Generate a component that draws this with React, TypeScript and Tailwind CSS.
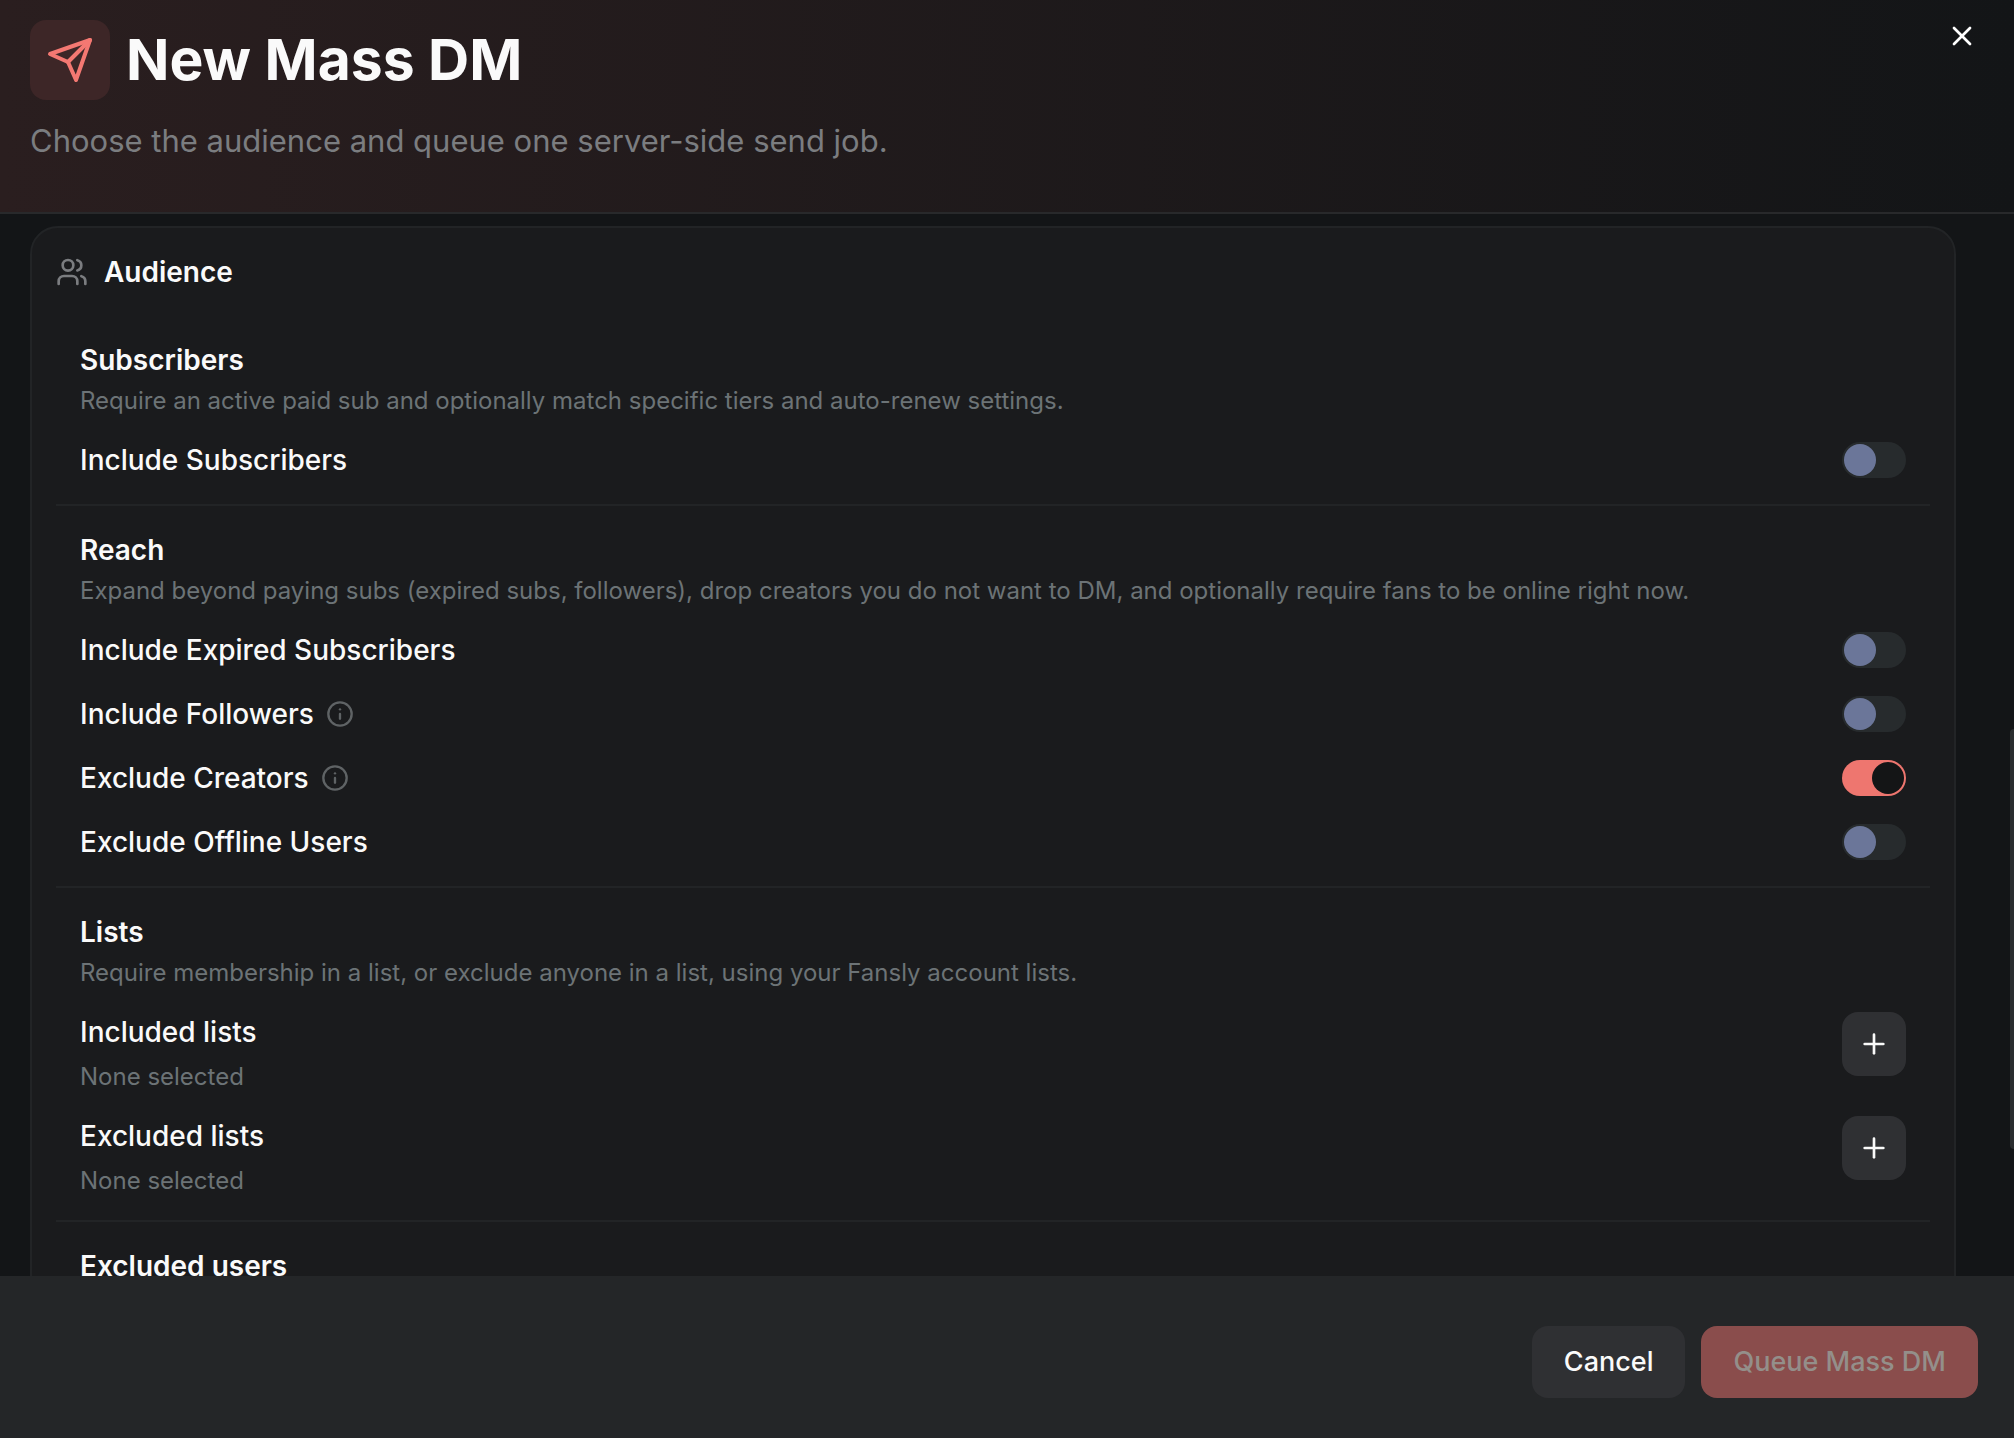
import { useState, type ReactNode } from "react";
import { Info, Plus, Users, X } from "lucide-react";

function SendIcon() {
  return (
    <svg
      viewBox="0 0 24 24"
      className="size-12"
      fill="none"
      stroke="currentColor"
      strokeWidth="2"
      strokeLinecap="round"
      strokeLinejoin="round"
      aria-hidden="true"
    >
      <path d="m22 2-7 20-4-9-9-4Z" />
      <path d="M22 2 11 13" />
    </svg>
  );
}

function Section({ title, description, children }: { title: string; description?: string; children?: ReactNode }) {
  return (
    <section className="border-b-2 border-[#222426] px-6 py-6 last:border-b-0">
      <h3 className="text-[28px] leading-10 font-semibold">{title}</h3>
      {description && <p className="text-2xl leading-[42px] text-[#6c7376]">{description}</p>}
      {children && <div className="mt-[18px] flex flex-col gap-6">{children}</div>}
    </section>
  );
}

function ToggleRow({ id, label, info, initial = false }: { id: string; label: string; info?: boolean; initial?: boolean }) {
  const [on, setOn] = useState(initial);
  return (
    <div className="flex h-10 items-center justify-between">
      <div className="flex items-center gap-3">
        <label htmlFor={id} className="text-[28px] leading-10 font-medium">
          {label}
        </label>
        {info && (
          <button type="button" aria-label={`About ${label}`} className="text-[#5f6365]">
            <Info className="size-7" strokeWidth={2} />
          </button>
        )}
      </div>
      <input
        id={id}
        type="checkbox"
        role="switch"
        checked={on}
        onChange={(e) => setOn(e.target.checked)}
        className="h-9 w-16 shrink-0 cursor-pointer appearance-none rounded-full border-2 border-transparent bg-[#272b2d] bg-clip-border before:block before:size-8 before:rounded-full before:bg-[#6b7699] before:content-[''] checked:bg-[#ee766f] checked:before:translate-x-7 checked:before:bg-[#141516]"
      />
    </div>
  );
}

function ListRow({ label }: { label: string }) {
  return (
    <div className="flex items-start justify-between">
      <div>
        <h4 className="text-[28px] leading-10 font-medium">{label}</h4>
        <p className="mt-2.5 text-2xl leading-[30px] text-[#6c7376]">None selected</p>
      </div>
      <button
        type="button"
        aria-label={`Add to ${label}`}
        className="flex size-16 items-center justify-center rounded-2xl bg-[#2f3033]"
      >
        <Plus className="size-8" strokeWidth={2} />
      </button>
    </div>
  );
}

export default function App() {
  return (
    <div
      role="dialog"
      aria-labelledby="dialog-title"
      className="flex h-screen flex-col bg-[#131517] font-['Inter',sans-serif] text-[#fafafa]"
    >
      <header className="flex shrink-0 items-start justify-between border-b-2 border-[#28292b] bg-linear-to-r from-[#2a1e1f] to-[#131517] pt-5 pr-9 pb-[50px] pl-[30px]">
        <div>
          <div className="flex items-center gap-4">
            <div className="flex size-20 items-center justify-center rounded-2xl bg-[#3d2627] text-[#f47872]">
              <SendIcon />
            </div>
            <h1 id="dialog-title" className="text-[57px] leading-20 font-bold">
              New Mass DM
            </h1>
          </div>
          <p className="mt-5 text-[31px] leading-[42px] text-[#7b7d80]">
            Choose the audience and queue one server-side send job.
          </p>
        </div>
        <button type="button" aria-label="Close" className="text-white">
          <X className="size-8" strokeWidth={2} />
        </button>
      </header>

      <div className="flex min-h-0 flex-1 justify-between overflow-hidden pl-[30px]">
        <main className="mt-3 mr-[54px] flex-1 self-start rounded-[28px] border-2 border-[#222426] bg-[#1a1b1d] p-6">
          <h2 className="flex items-center gap-4 text-[28px] leading-10 font-semibold">
            <Users className="size-8 text-[#7b7d80]" strokeWidth={2} />
            Audience
          </h2>
          <div className="mt-6">
            <Section
              title="Subscribers"
              description="Require an active paid sub and optionally match specific tiers and auto-renew settings."
            >
              <ToggleRow id="include-subscribers" label="Include Subscribers" />
            </Section>
            <Section
              title="Reach"
              description="Expand beyond paying subs (expired subs, followers), drop creators you do not want to DM, and optionally require fans to be online right now."
            >
              <ToggleRow id="include-expired" label="Include Expired Subscribers" />
              <ToggleRow id="include-followers" label="Include Followers" info />
              <ToggleRow id="exclude-creators" label="Exclude Creators" info initial />
              <ToggleRow id="exclude-offline" label="Exclude Offline Users" />
            </Section>
            <Section
              title="Lists"
              description="Require membership in a list, or exclude anyone in a list, using your Fansly account lists."
            >
              <ListRow label="Included lists" />
              <ListRow label="Excluded lists" />
            </Section>
            <Section title="Excluded users" />
          </div>
        </main>
        <div aria-hidden="true" className="flex w-1 flex-col">
          <div className="grow-515" />
          <div className="grow-420 rounded-l-full bg-[#2a2d2f]" />
          <div className="grow-127" />
        </div>
      </div>

      <footer className="flex shrink-0 justify-end gap-4 bg-[#242628] px-9 pt-[50px] pb-10">
        <button type="button" className="h-18 rounded-2xl bg-[#2f3033] px-8 text-[27px] font-medium">
          Cancel
        </button>
        <button type="button" disabled className="h-18 rounded-2xl bg-[#8a4d4c] px-8 text-[27px] font-medium text-[#948f8a]">
          Queue Mass DM
        </button>
      </footer>
    </div>
  );
}
